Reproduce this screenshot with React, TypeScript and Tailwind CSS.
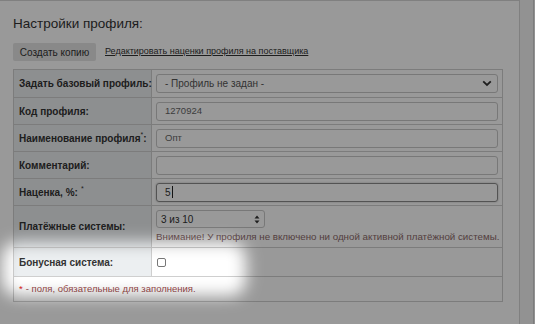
import React from 'react';

const rows = [
  { label: 'Код профиля:', value: '1270924' },
  { label: 'Наименование профиля', req: true, value: 'Опт' },
  { label: 'Комментарий:', value: '' },
];

function Label({ children }: { children: React.ReactNode }) {
  return (
    <div className="flex w-[138px] shrink-0 items-center whitespace-nowrap border-r border-[#cfcfcf] bg-[#eceff1] pl-[5px] text-[10px] font-bold text-[#333]">
      {children}
    </div>
  );
}

export default function App() {
  return (
    <div
      className="relative flex h-[324px] w-[535px] overflow-hidden bg-[#f3f3f3]"
      style={{ fontFamily: '"Liberation Sans", Arial, sans-serif' }}
    >
      <div className="w-[520px] shrink-0 border-t border-r border-[#d6d6d6] bg-white pl-[13px] pt-[14px]">
        <h1 className="text-[13.5px] leading-[17px] text-[#333]">Настройки профиля:</h1>

        <div className="mt-[11px] flex items-center gap-[9px]">
          <button className="h-[18px] w-[83px] rounded-[2px] bg-[#e4e4e4] text-[10px] text-[#333]">
            Создать копию
          </button>
          <a className="text-[9px] text-[#333] underline">Редактировать наценки профиля на поставщика</a>
        </div>

        <div className="mt-[8px] w-[490px] border border-[#cfcfcf]">
          <div className="flex h-[28px] border-b border-[#cfcfcf]">
            <Label>Задать базовый профиль:</Label>
            <div className="flex flex-1 items-center px-[4px]">
              <div className="flex h-[19px] w-full items-center justify-between rounded-[3px] border border-[#c8c8c8] pl-[8px] pr-[5px] text-[10px] text-[#555]">
                <span>- Профиль не задан -</span>
                <svg width="10" height="7" viewBox="0 0 10 7">
                  <path d="M1.2 1.3 5 5 8.8 1.3" fill="none" stroke="#333" strokeWidth="1.8" />
                </svg>
              </div>
            </div>
          </div>

          {rows.map((r) => (
            <div key={r.label} className="flex h-[27px] border-b border-[#cfcfcf]">
              <Label>
                {r.label}
                {r.req && <sup className="text-[7px] font-normal">*</sup>}
                {r.req && ':'}
              </Label>
              <div className="flex flex-1 items-center px-[4px]">
                <div className="flex h-[19px] w-full items-center rounded-[3px] border border-[#c8c8c8] px-[8px] text-[9.5px] text-[#666]">
                  {r.value}
                </div>
              </div>
            </div>
          ))}

          <div className="flex h-[27px] border-b border-[#cfcfcf]">
            <Label>
              Наценка, %: <sup className="ml-[3px] text-[7px] font-normal">*</sup>
            </Label>
            <div className="flex flex-1 items-center px-[4px]">
              <div className="flex h-[19px] w-full items-center rounded-[3px] border border-[#8a8a8a] px-[8px] text-[10px] text-[#333] shadow-[0_0_2px_rgba(0,0,0,0.3)]">
                5<span className="ml-[1px] h-[12px] w-[1px] bg-[#222]" />
              </div>
            </div>
          </div>

          <div className="flex h-[42px] border-b border-[#cfcfcf]">
            <Label>Платёжные системы:</Label>
            <div className="flex flex-1 flex-col justify-center px-[4px]">
              <div className="flex h-[18px] w-[109px] items-center justify-between rounded-[3px] border border-[#c8c8c8] pl-[4px] pr-[4px] text-[10px] text-[#333]">
                <span>3 из 10</span>
                <svg width="6" height="9" viewBox="0 0 6 9">
                  <path d="M0.5 3.5 3 0.5 5.5 3.5Z M0.5 5.5 3 8.5 5.5 5.5Z" fill="#333" />
                </svg>
              </div>
              <div className="mt-[3px] whitespace-nowrap text-[9.75px] leading-[12px] text-[#8c6a6a]">
                Внимание! У профиля не включено ни одной активной платёжной системы.
              </div>
            </div>
          </div>

          <div className="flex h-[29px] border-b border-[#cfcfcf]">
            <Label>Бонусная система:</Label>
            <div className="flex flex-1 items-center px-[5px]">
              <div className="h-[9px] w-[9px] rounded-[2px] border border-[#777] bg-white" />
            </div>
          </div>

          <div className="flex h-[24px] items-center pl-[5px] text-[9.5px] text-[#9a4a4a]">
            <span className="mr-[3px] text-[#e02020]">*</span>- поля, обязательные для заполнения.
          </div>
        </div>
      </div>
      <div className="ml-[13px] w-[1px] shrink-0 bg-[#cfcfcf]" />

      <div className="pointer-events-none absolute left-[2px] top-[242px] h-[54px] w-[244px] rounded-[16px] shadow-[0_0_0_9999px_rgba(0,0,0,0.4)] blur-[8px]" />
    </div>
  );
}
